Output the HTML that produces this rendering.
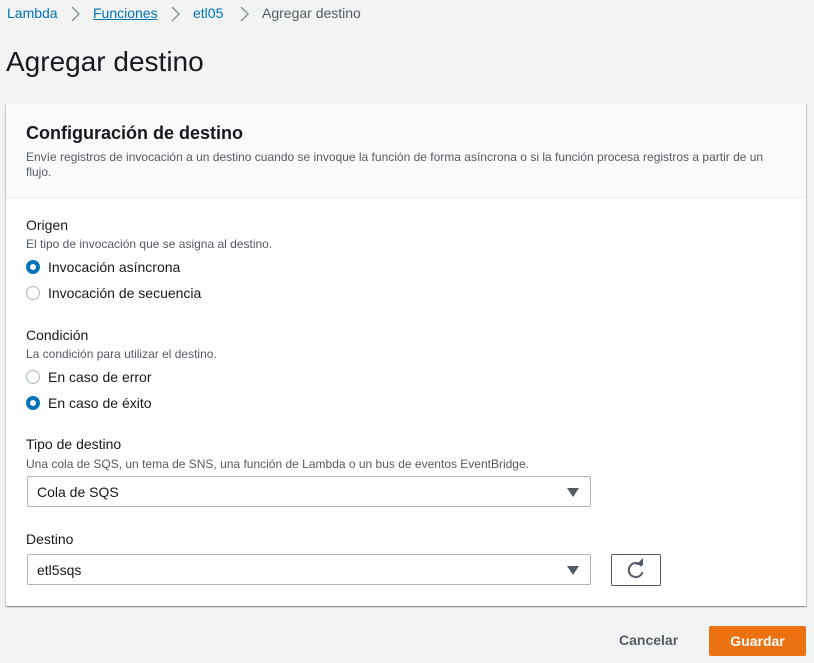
<!DOCTYPE html>
<html><head><meta charset="utf-8"><style>
*{margin:0;padding:0;box-sizing:border-box}
body{width:814px;height:663px;background:#f2f3f3;font-family:"Liberation Sans",sans-serif;color:#16191f;position:relative;overflow:hidden}
.a{position:absolute;white-space:nowrap}
.bc{top:5px;font-size:14px;color:#0073bb}
.sep{top:6px}
.card{position:absolute;left:6px;top:104px;width:800px;height:502px;background:#fff;box-shadow:0 1px 1px rgba(0,28,36,.3),1px 1px 1px rgba(0,28,36,.15),-1px 1px 1px rgba(0,28,36,.15)}
.hd{position:absolute;left:0;top:0;width:800px;height:94px;background:#fafafa;border-bottom:1px solid #eaeded}
.lbl{font-size:14px}
.hint{font-size:12px;color:#545b64}
.r{width:14px;height:14px;border-radius:50%;border:1px solid #aab7b8;background:#fff}
.r.on{border:4px solid #0073bb}
.sel{position:absolute;left:21px;width:564px;height:31px;border:1px solid #aab7b8;border-radius:2px;font-size:14px;padding:7px 9px}
.tri{position:absolute;right:11px;top:11px;width:0;height:0;border-left:6px solid transparent;border-right:6px solid transparent;border-top:9px solid #545b64}
</style></head><body>
<div class="a bc" style="left:7px">Lambda</div>
<svg class="a sep" style="left:70px" width="10" height="16" viewBox="0 0 10 16"><path d="M2 1l7 7-7 7" fill="none" stroke="#879596" stroke-width="1.5"/></svg>
<div class="a bc" style="left:93px;text-decoration:underline">Funciones</div>
<svg class="a sep" style="left:170px" width="10" height="16" viewBox="0 0 10 16"><path d="M2 1l7 7-7 7" fill="none" stroke="#879596" stroke-width="1.5"/></svg>
<div class="a bc" style="left:193px">etl05</div>
<svg class="a sep" style="left:239px" width="10" height="16" viewBox="0 0 10 16"><path d="M2 1l7 7-7 7" fill="none" stroke="#879596" stroke-width="1.5"/></svg>
<div class="a" style="left:262px;top:5px;font-size:14px;color:#545b64">Agregar destino</div>
<div class="a" style="left:6px;top:46px;font-size:28px">Agregar destino</div>
<div class="card">
<div class="hd">
<div class="a" style="left:20px;top:19px;font-size:18px;font-weight:bold">Configuración de destino</div>
<div class="a" style="left:20px;top:46px;font-size:12px;line-height:15px;color:#545b64;white-space:normal;width:745px">Envíe registros de invocación a un destino cuando se invoque la función de forma asíncrona o si la función procesa registros a partir de un flujo.</div>
</div>
<div class="a lbl" style="left:20px;top:113px">Origen</div>
<div class="a hint" style="left:20px;top:133px">El tipo de invocación que se asigna al destino.</div>
<div class="a r on" style="left:20px;top:156px"></div><div class="a lbl" style="left:42px;top:155px">Invocación asíncrona</div>
<div class="a r" style="left:20px;top:182px"></div><div class="a lbl" style="left:42px;top:181px">Invocación de secuencia</div>
<div class="a lbl" style="left:20px;top:223px">Condición</div>
<div class="a hint" style="left:20px;top:243px">La condición para utilizar el destino.</div>
<div class="a r" style="left:20px;top:266px"></div><div class="a lbl" style="left:42px;top:265px">En caso de error</div>
<div class="a r on" style="left:20px;top:292px"></div><div class="a lbl" style="left:42px;top:291px">En caso de éxito</div>
<div class="a lbl" style="left:20px;top:332px">Tipo de destino</div>
<div class="a hint" style="left:20px;top:353px">Una cola de SQS, un tema de SNS, una función de Lambda o un bus de eventos EventBridge.</div>
<div class="sel" style="top:372px">Cola de SQS<div class="tri"></div></div>
<div class="a lbl" style="left:20px;top:427px">Destino</div>
<div class="sel" style="top:450px">etl5sqs<div class="tri"></div></div>
<div class="a" style="left:605px;top:450px;width:50px;height:32px;border:1px solid #545b64;border-radius:2px">
<svg width="50" height="30" viewBox="0 0 50 30" style="position:absolute;left:-1px;top:0"><path d="M30.5 11A7 7 0 1 0 31.5 17" fill="none" stroke="#545b64" stroke-width="2"/><path d="M25 10h7v-7z" fill="#545b64"/></svg>
</div>
</div>
<div class="a" style="left:619px;top:632px;font-size:14px;font-weight:bold;color:#545b64">Cancelar</div>
<div class="a" style="left:709px;top:626px;width:97px;height:30px;background:#ec7211;border-radius:2px;color:#fff;font-size:14px;font-weight:bold;text-align:center;line-height:30px">Guardar</div>
</body></html>
